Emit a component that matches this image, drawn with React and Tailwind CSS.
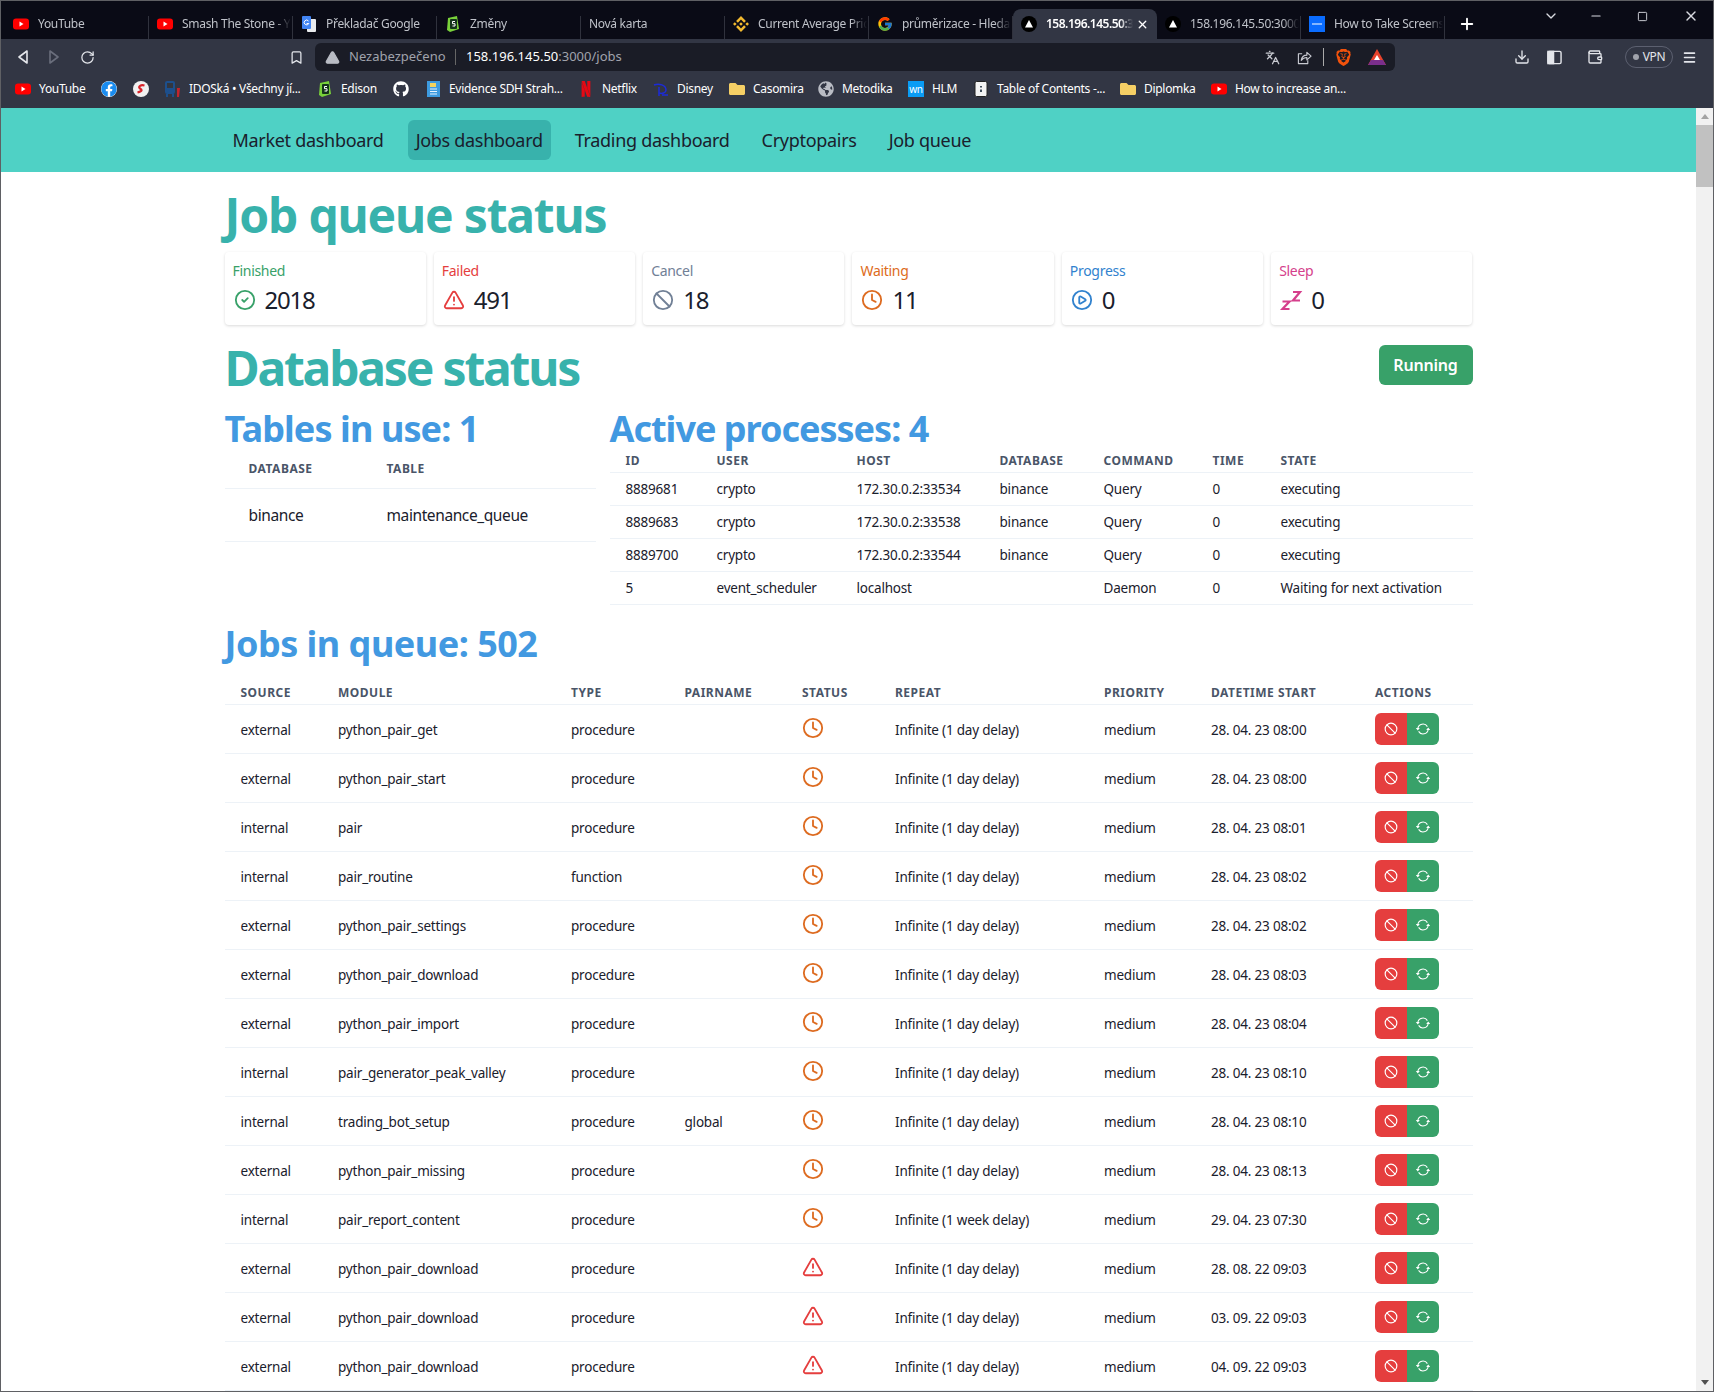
import { ChevronDown, Minus, Square, X, Plus, RotateCw, Bookmark, TriangleAlert, Languages, Download, Wallet, Menu, CircleCheck, Ban, Clock, CirclePlay } from "lucide-react";
import { FaFacebook, FaGithub, FaGlobeAmericas, FaFolder } from "react-icons/fa";
import { FcGoogle } from "react-icons/fc";
import { SiBinance, SiNetflix, SiBrave } from "react-icons/si";

const Yt = () => (
  <svg viewBox="0 0 16 16" className="w-4 h-4 shrink-0">
    <rect x="0" y="2.5" width="16" height="11" rx="3" fill="#f00" />
    <path d="M6.5 5.6v4.8L10.5 8z" fill="#fff" />
  </svg>
);
const Vercel = () => (
  <svg viewBox="0 0 16 16" className="w-4 h-4 shrink-0">
    <circle cx="8" cy="8" r="8" fill="#000" />
    <path d="M8 4l4 7.5H4z" fill="#fff" />
  </svg>
);
const GTranslate = () => (
  <svg viewBox="0 0 16 16" className="w-4 h-4 shrink-0">
    <rect x="6" y="3" width="9" height="13" rx="1" fill="#e8eaed" />
    <rect x="1" y="0" width="9" height="13" rx="1" fill="#4285f4" />
    <path d="M7.5 5a2.4 2.4 0 1 0 .3 2.5H5.6" stroke="#fff" fill="none" />
  </svg>
);
const Sheet = () => (
  <svg viewBox="0 0 16 16" className="w-4 h-4 shrink-0">
    <path d="M3 2l9-2 2 13-9 3-3-2z" fill="#79d13a" />
    <rect x="5" y="3" width="7" height="10" rx="1" fill="#14331a" />
    <path d="M10 5.5H7.5v2.2H10V10H7.5" stroke="#fff" fill="none" />
  </svg>
);
const Blue = () => (
  <svg viewBox="0 0 16 16" className="w-4 h-4 shrink-0">
    <rect width="16" height="16" fill="#0a6cff" />
    <rect x="3" y="7.5" width="10" height="1" fill="#fff" />
  </svg>
);
const SIcon = () => (
  <svg viewBox="0 0 16 16" className="w-4 h-4 shrink-0">
    <circle cx="8" cy="8" r="8" fill="#f1f1f1" />
    <path d="M11.5 4.5C8 3.5 4.5 5.5 7 7.5c2 1.2 3 2.5-2.5 4" stroke="#d8232a" strokeWidth="2.2" fill="none" />
  </svg>
);
const Idos = () => (
  <svg viewBox="0 0 16 16" className="w-4 h-4 shrink-0">
    <rect x="0" y="0" width="10" height="13" rx="2" fill="#1d4f8c" />
    <rect x="2" y="2" width="6" height="5" fill="#32363f" />
    <path d="M2 13v3M8 13v3" stroke="#1d4f8c" strokeWidth="2" />
    <path d="M12 7h3l-1 9h-2z" fill="#c4242c" />
  </svg>
);
const Evidence = () => (
  <svg viewBox="0 0 16 16" className="w-4 h-4 shrink-0">
    <rect x="2" y="0" width="13" height="16" fill="#3d9be0" />
    <rect x="5" y="2" width="6" height="4" fill="#f4d35e" />
    <path d="M5 8h7M5 10.5h7M5 13h7" stroke="#e8f4ff" />
  </svg>
);
const Disney = () => (
  <svg viewBox="0 0 16 16" className="w-4 h-4 shrink-0" fill="none" stroke="#1c2bd8" strokeWidth="1.5">
    <path d="M1 4c5-2 12 0 12 5 0 3-4 4-7 3" />
    <path d="M6 6v9" />
    <path d="M9 14h6" />
  </svg>
);
const Toc = () => (
  <svg viewBox="0 0 16 16" className="w-4 h-4 shrink-0">
    <rect x="2" y="0.5" width="12" height="15" rx="1.5" fill="#f3f3f3" stroke="#222" />
    <path d="M8 5v1.5M8 8.5V11" stroke="#123" strokeWidth="1.6" />
  </svg>
);
const Wn = () => (
  <span className="w-4 h-4 shrink-0 bg-[#0a9cf5] text-white text-[10px] leading-4 text-center">wn</span>
);
const Folder = () => <FaFolder className="w-4 h-4 shrink-0 text-[#f5cf65]" />;

// brave's back/forward arrows are outlined triangles
const NavArrow = ({ flip, className }) => (
  <svg viewBox="0 0 12 16" className={"w-3 h-4 shrink-0 " + className} fill="none" stroke="currentColor" strokeWidth="1.6" strokeLinejoin="round">
    <path d={flip ? "M2 2l8 6-8 6z" : "M10 2L2 8l8 6z"} />
  </svg>
);

const ShareBox = () => (
  <svg viewBox="0 0 16 16" className="ml-[17px] w-[15px] h-[15px] shrink-0" fill="none" stroke="#c9cbd2" strokeWidth="1.2" strokeLinejoin="round">
    <path d="M5.5 4H1.5v10.5h10V11" />
    <path d="M4.5 11C5 7.5 7.5 5.5 10.5 5.5V2.5L15 6.5 10.5 10.5V8C8 8 6 9 4.5 11z" />
  </svg>
);

const TABS = [
  { title: "YouTube", icon: <Yt /> },
  { title: "Smash The Stone - Y", icon: <Yt /> },
  { title: "Překladač Google", icon: <GTranslate /> },
  { title: "Změny", icon: <Sheet /> },
  { title: "Nová karta" },
  { title: "Current Average Pric", icon: <SiBinance className="w-4 h-4 shrink-0 text-[#f3ba2f]" /> },
  { title: "průměrizace - Hleda", icon: <FcGoogle className="w-4 h-4 shrink-0" /> },
  { title: "158.196.145.50:3", icon: <Vercel />, active: true },
  { title: "158.196.145.50:3000", icon: <Vercel /> },
  { title: "How to Take Screens", icon: <Blue /> },
];

const BOOKMARKS = [
  { title: "YouTube", icon: <Yt />, w: "w-[46px]" },
  { icon: <FaFacebook className="w-4 h-4 shrink-0 text-[#1a8cf0] bg-white rounded-full" /> },
  { icon: <SIcon /> },
  { title: "IDOSká • Všechny jí...", icon: <Idos />, w: "w-[112px]" },
  { title: "Edison", icon: <Sheet />, w: "w-[36px]" },
  { icon: <FaGithub className="w-4 h-4 shrink-0 text-white" /> },
  { title: "Evidence SDH Strah...", icon: <Evidence />, w: "w-[113px]" },
  { title: "Netflix", icon: <SiNetflix className="w-4 h-4 shrink-0 text-[#e50914]" />, w: "w-[35px]" },
  { title: "Disney", icon: <Disney />, w: "w-[36px]" },
  { title: "Casomira", icon: <Folder />, w: "w-[49px]" },
  { title: "Metodika", icon: <FaGlobeAmericas className="w-4 h-4 shrink-0 text-[#b9bcc4]" />, w: "w-[50px]" },
  { title: "HLM", icon: <Wn />, w: "w-[25px]" },
  { title: "Table of Contents -...", icon: <Toc />, w: "w-[107px]" },
  { title: "Diplomka", icon: <Folder />, w: "w-[51px]" },
  { title: "How to increase an...", icon: <Yt />, w: "w-[111px]" },
];

const NAV = ["Market dashboard", "Jobs dashboard", "Trading dashboard", "Cryptopairs", "Job queue"];

const Zzz = () => (
  <svg viewBox="0 0 24 24" className="w-6 h-6 shrink-0" fill="none" stroke="#d53f8c" strokeWidth="2.2">
    <path d="M3.5 13.5h7L3.5 21h7" />
    <path d="M14 4h7l-7 8.5h7" />
  </svg>
);

const STATS = [
  { label: "Finished", value: "2018", color: "text-[#38a169]", Icon: CircleCheck },
  { label: "Failed", value: "491", color: "text-[#e53e3e]", Icon: TriangleAlert },
  { label: "Cancel", value: "18", color: "text-[#718096]", Icon: Ban },
  { label: "Waiting", value: "11", color: "text-[#dd6b20]", Icon: Clock },
  { label: "Progress", value: "0", color: "text-[#3182ce]", Icon: CirclePlay },
  { label: "Sleep", value: "0", color: "text-[#d53f8c]", Icon: null },
];

const PROCESSES = [
  ["8889681", "crypto", "172.30.0.2:33534", "binance", "Query", "0", "executing"],
  ["8889683", "crypto", "172.30.0.2:33538", "binance", "Query", "0", "executing"],
  ["8889700", "crypto", "172.30.0.2:33544", "binance", "Query", "0", "executing"],
  ["5", "event_scheduler", "localhost", "", "Daemon", "0", "Waiting for next activation"],
];

const D = "Infinite (1 day delay)";
const JOBS = [
  ["external", "python_pair_get", "procedure", "", "w", D, "28. 04. 23 08:00"],
  ["external", "python_pair_start", "procedure", "", "w", D, "28. 04. 23 08:00"],
  ["internal", "pair", "procedure", "", "w", D, "28. 04. 23 08:01"],
  ["internal", "pair_routine", "function", "", "w", D, "28. 04. 23 08:02"],
  ["external", "python_pair_settings", "procedure", "", "w", D, "28. 04. 23 08:02"],
  ["external", "python_pair_download", "procedure", "", "w", D, "28. 04. 23 08:03"],
  ["external", "python_pair_import", "procedure", "", "w", D, "28. 04. 23 08:04"],
  ["internal", "pair_generator_peak_valley", "procedure", "", "w", D, "28. 04. 23 08:10"],
  ["internal", "trading_bot_setup", "procedure", "global", "w", D, "28. 04. 23 08:10"],
  ["external", "python_pair_missing", "procedure", "", "w", D, "28. 04. 23 08:13"],
  ["internal", "pair_report_content", "procedure", "", "w", "Infinite (1 week delay)", "29. 04. 23 07:30"],
  ["external", "python_pair_download", "procedure", "", "f", D, "28. 08. 22 09:03"],
  ["external", "python_pair_download", "procedure", "", "f", D, "03. 09. 22 09:03"],
  ["external", "python_pair_download", "procedure", "", "f", D, "04. 09. 22 09:03"],
];

const TH = "font-bold uppercase text-[12px] tracking-[0.5px] text-[#4a5568] text-left px-4 border-b border-[#edf2f7]";
const CELL = "text-[13.5px] tracking-[-0.2px] text-[#1a202c] px-4 border-b border-[#edf2f7]";
const TD = CELL + " pt-0.5";

function Chrome() {
  return (
    <div className="shrink-0 text-[12px] tracking-[-0.3px]">
      <div className="flex h-[38px] bg-[#0a0b16] pl-1 text-[#bfc2c9]">
        {TABS.map((t) => (
          <div
            key={t.title + t.active}
            className={
              t.active
                ? "mt-2 h-[30px] w-[144px] flex items-center gap-[9px] pl-2 pr-2 bg-[#323644] rounded-t-lg text-white font-semibold tracking-[-0.5px]"
                : "mt-2 h-[30px] w-[144px] flex items-center gap-[9px] pl-2"
            }
          >
            {t.icon}
            <span className="flex-1 overflow-hidden whitespace-nowrap [mask-image:linear-gradient(to_right,black_85%,transparent)]">{t.title}</span>
            {t.active ? (
              <X size={13} strokeWidth={2.5} className="-ml-[6px] shrink-0 text-white" />
            ) : (
              <span className="-ml-2 w-px h-[23px] self-end shrink-0 bg-[#30323d]" />
            )}
          </div>
        ))}
        <Plus size={18} strokeWidth={2.5} className="mt-[14px] ml-[13px] text-white" />
        <div className="ml-auto flex items-start text-[#d8dae0]">
          <ChevronDown size={16} className="mt-[7px] mr-[30px]" />
          <Minus size={14} className="mt-2 mr-[34px]" />
          <Square size={11} className="mt-[10px] mr-[35px]" />
          <X size={16} className="mt-[7px] mr-[14px]" />
        </div>
      </div>
      <div className="h-[69px] bg-[#323644] text-white">
        <div className="flex items-center h-9 text-[#e4e6eb]">
          <NavArrow className="ml-[16px]" />
          <NavArrow flip className="ml-[19px] text-[#6a6e7c]" />
          <RotateCw size={15} className="ml-[20px]" />
          <Bookmark size={15} className="ml-[194px]" />
          <div className="ml-[11px] w-[1080px] h-7 bg-[#1a1c26] rounded-md flex items-center pl-[10px] pr-[9px]">
            <TriangleAlert size={15} className="text-[#b9bcc4] fill-[#b9bcc4] stroke-[#b9bcc4]" />
            <span className="ml-[9px] w-[98px] text-[#a0a3ac] text-[13px] tracking-normal whitespace-nowrap">Nezabezpečeno</span>
            <span className="ml-2 mr-[10px] w-px h-4 bg-[#666]" />
            <span className="text-white text-[13px] tracking-normal">158.196.145.50</span>
            <span className="text-[#a0a3ac] text-[13px] tracking-normal">:3000/jobs</span>
            <Languages size={15} className="ml-auto text-[#c9cbd2]" />
            <ShareBox />
            <span className="ml-[11px] w-px h-[18px] bg-[#aaa]" />
            <SiBrave size={17} className="ml-[11px] text-[#f1520c]" />
            <svg viewBox="0 0 18 16" className="ml-4 w-[18px] h-4 shrink-0">
              <path d="M9 0l9 16H0z" fill="#e8432c" />
              <path d="M0 16l3-5h12l3 5z" fill="#7a2e8c" />
              <path d="M9 6l3 5H6z" fill="#fff" />
            </svg>
          </div>
          <Download size={16} className="ml-[119px]" />
          <svg viewBox="0 0 16 16" className="ml-[17px] w-[15px] h-[15px]" fill="none" stroke="#e4e6eb" strokeWidth="1.5">
            <rect x="1" y="1.5" width="14" height="13" rx="1.5" />
            <rect x="1" y="1.5" width="6" height="13" fill="#e4e6eb" />
          </svg>
          <Wallet size={16} className="ml-[25px]" />
          <div className="ml-[22px] w-12 h-[22px] rounded-full border border-[#5c6070] flex items-center justify-center gap-1 text-[12px]">
            <span className="w-[6px] h-[6px] rounded-full bg-[#a0a3ac]" />
            VPN
          </div>
          <Menu size={15} strokeWidth={2.5} className="ml-[9px]" />
        </div>
        <div className="flex items-center h-7 pl-[14px] gap-4">
          {BOOKMARKS.map((b, i) => (
            <div key={i} className="flex items-center gap-2 shrink-0">
              {b.icon}
              {b.title && <span className={"whitespace-nowrap " + b.w}>{b.title}</span>}
            </div>
          ))}
        </div>
      </div>
    </div>
  );
}

function Scrollbar() {
  return (
    <div className="w-[17px] shrink-0 bg-[#f1f1f1] flex flex-col items-center">
      <span className="mt-[6px] w-0 h-0 border-x-[4px] border-x-transparent border-b-[5px] border-b-[#a3a3a3]" />
      <div className="mt-[6px] w-full h-[62px] bg-[#c1c1c1]" />
      <span className="mt-auto mb-[6px] w-0 h-0 border-x-[4px] border-x-transparent border-t-[5px] border-t-[#505050]" />
    </div>
  );
}

function ActionButtons() {
  return (
    <div className="flex w-16 h-8 rounded-md overflow-hidden">
      <div className="w-8 bg-[#e53e3e] flex items-center justify-center">
        <Ban size={14} className="text-white" />
      </div>
      <div className="w-8 bg-[#38a169] flex items-center justify-center">
        <svg viewBox="0 0 16 16" className="w-4 h-4" fill="none" stroke="#fff" strokeWidth="1.1">
          <path d="M2.8 7.5A5.2 5.2 0 0 1 12.4 5.6" />
          <path d="M13.2 8.5A5.2 5.2 0 0 1 3.6 10.4" />
          <path d="M0.8 7h4l-2 2.5zM11.2 9h4l-2-2.5z" fill="#fff" stroke="none" />
        </svg>
      </div>
    </div>
  );
}

export default function App() {
  return (
    <div className="h-screen flex flex-col overflow-hidden border border-[#5f6064] bg-white font-['Noto_Sans','Open_Sans',sans-serif]">
      <Chrome />
      <div className="flex flex-1 min-h-0">
        <div className="flex-1 min-w-0 overflow-hidden">
          <nav className="h-16 bg-[#4fd1c5]">
            <div className="w-[1248px] mx-auto flex items-center gap-4 h-full text-[18px] tracking-[-0.3px] text-[#1a202c]">
              {NAV.map((n) => (
                <a key={n} className={n === "Jobs dashboard" ? "h-10 px-2 rounded-md flex items-center bg-[#38b2ac]" : "h-10 px-2 flex items-center"}>
                  {n}
                </a>
              ))}
            </div>
          </nav>
          <main className="w-[1248px] mx-auto">
            <h1 className="mt-2 h-[58px] text-[48px] leading-[70px] tracking-[-1.2px] font-bold text-[#38b2ac]">Job queue status</h1>
            <div className="mt-[14px] grid grid-cols-6 gap-2">
              {STATS.map(({ label, value, color, Icon }) => (
                <div key={label} className="h-[73px] px-2 pt-[9px] rounded-sm bg-white shadow-[0_1px_3px_rgba(0,0,0,0.15)]">
                  <div className={"text-[14px] tracking-[-0.3px] leading-5 " + color}>{label}</div>
                  <div className="mt-[3px] flex items-center gap-2 text-[24px] tracking-[-1.2px] leading-8 text-[#1a202c]">
                    {Icon ? <Icon size={22} className={"mx-px shrink-0 " + color} /> : <Zzz />}
                    {value}
                  </div>
                </div>
              ))}
            </div>
            <div className="mt-2 flex justify-between items-start">
              <h1 className="h-[58px] text-[48px] leading-[70px] tracking-[-2.2px] font-bold text-[#38b2ac]">Database status</h1>
              <button className="mt-3 h-10 w-[94px] rounded-md bg-[#38a169] text-white font-semibold text-[16px] tracking-[-0.2px]">Running</button>
            </div>
            <div className="mt-[16px] grid grid-cols-[371px_863px] gap-[14px]">
              <div>
                <h2 className="h-[43px] text-[36px] leading-[43px] tracking-[-0.9px] font-bold text-[#4299e1]">Tables in use: 1</h2>
                <table className="w-full table-fixed border-collapse">
                  <thead>
                    <tr className="h-[38px]">
                      <th className={TH + " px-6 w-[138px]"}>Database</th>
                      <th className={TH + " px-6"}>Table</th>
                    </tr>
                  </thead>
                  <tbody>
                    <tr className="h-[53px]">
                      <td className="px-6 pt-0.5 text-[15.5px] tracking-[-0.4px] text-[#1a202c] border-b border-[#edf2f7]">binance</td>
                      <td className="px-6 pt-0.5 text-[15.5px] tracking-[-0.4px] text-[#1a202c] border-b border-[#edf2f7]">maintenance_queue</td>
                    </tr>
                  </tbody>
                </table>
              </div>
              <div>
                <h2 className="h-[43px] text-[36px] leading-[43px] tracking-[-1px] font-bold text-[#4299e1]">Active processes: 4</h2>
                <table className="w-full table-fixed border-collapse">
                  <colgroup>
                    <col className="w-[91px]" />
                    <col className="w-[140px]" />
                    <col className="w-[143px]" />
                    <col className="w-[104px]" />
                    <col className="w-[109px]" />
                    <col className="w-[68px]" />
                    <col />
                  </colgroup>
                  <thead>
                    <tr className="h-[22px]">
                      {["ID", "User", "Host", "Database", "Command", "Time", "State"].map((h) => (
                        <th key={h} className={TH}>{h}</th>
                      ))}
                    </tr>
                  </thead>
                  <tbody>
                    {PROCESSES.map((r) => (
                      <tr key={r[0]} className="h-[33px]">
                        {r.map((c, i) => (
                          <td key={i} className={TD + " whitespace-nowrap"}>{c}</td>
                        ))}
                      </tr>
                    ))}
                  </tbody>
                </table>
              </div>
            </div>
            <h2 className="mt-[19px] h-[43px] text-[36px] leading-[40px] tracking-[-0.5px] font-bold text-[#4299e1]">Jobs in queue: 502</h2>
            <table className="mt-[14px] w-full table-fixed border-collapse">
              <colgroup>
                <col className="w-[97.5px]" />
                <col className="w-[233px]" />
                <col className="w-[113.5px]" />
                <col className="w-[117.5px]" />
                <col className="w-[93px]" />
                <col className="w-[209px]" />
                <col className="w-[107px]" />
                <col className="w-[164px]" />
                <col />
              </colgroup>
              <thead>
                <tr className="h-[24px]">
                  {["Source", "Module", "Type", "Pairname", "Status", "Repeat", "Priority", "Datetime start", "Actions"].map((h) => (
                    <th key={h} className={TH + " pt-0.5 whitespace-nowrap"}>{h}</th>
                  ))}
                </tr>
              </thead>
              <tbody>
                {JOBS.map((r, i) => (
                  <tr key={i} className="h-[49px]">
                    <td className={TD}>{r[0]}</td>
                    <td className={TD}>{r[1]}</td>
                    <td className={TD}>{r[2]}</td>
                    <td className={TD}>{r[3]}</td>
                    <td className={CELL}>
                      {r[4] === "w" ? (
                        <Clock size={22} className="text-[#dd6b20] -mt-0.5" />
                      ) : (
                        <TriangleAlert size={22} className="text-[#e53e3e] -mt-0.5" />
                      )}
                    </td>
                    <td className={TD + " whitespace-nowrap"}>{r[5]}</td>
                    <td className={TD}>medium</td>
                    <td className={TD + " whitespace-nowrap"}>{r[6]}</td>
                    <td className={CELL}><ActionButtons /></td>
                  </tr>
                ))}
              </tbody>
            </table>
          </main>
        </div>
        <Scrollbar />
      </div>
    </div>
  );
}
